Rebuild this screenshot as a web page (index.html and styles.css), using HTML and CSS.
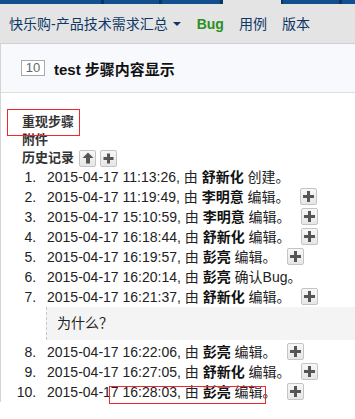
FILE: index.html
```html
<!DOCTYPE html>
<html lang="zh-CN">
<head>
    <meta charset="UTF-8">
    <meta name="viewport" content="width=device-width, initial-scale=1.0">
    <title>test 步骤内容显示</title>
    <link rel="stylesheet" href="styles.css">
</head>
<body>
    <div class="top-strip">
        <span class="tab" style="width: 104px"></span>
        <span class="tab" style="width: 58px"></span>
        <span class="tab" style="width: 61px"></span>
        <span class="tab tab-active" style="width: 60px"></span>
        <span class="tab" style="width: 59px"></span>
        <span class="tab"></span>
    </div>

    <div class="navbar">
        <span class="product">快乐购-产品技术需求汇总</span>
        <span class="caret"></span>
        <span class="nav-item nav-bug">Bug</span>
        <span class="nav-item">用例</span>
        <span class="nav-item">版本</span>
    </div>

    <div class="main">
        <div class="title-bar">
            <span class="bug-id">10</span>
            <span class="bug-title">test 步骤内容显示</span>
        </div>

        <div class="content">
            <div class="section-label">重现步骤</div>
            <div class="section-label">附件</div>
            <div class="section-label history-head">
                历史记录
                <span class="mini-btn first">
                    <svg width="12" height="12" viewBox="0 0 12 12"><path d="M6 0.5 L11.5 6 L8 6 L8 11.5 L4 11.5 L4 6 L0.5 6 Z" fill="#555"/></svg>
                </span>
                <span class="mini-btn">
                    <svg width="11" height="11" viewBox="0 0 11 11"><path d="M4 0.5 H7 V4 H10.5 V7 H7 V10.5 H4 V7 H0.5 V4 H4 Z" fill="#555"/></svg>
                </span>
            </div>

            <ol class="history">
                <li>2015-04-17 11:13:26, 由 <b>舒新化</b> 创建。</li>
                <li>2015-04-17 11:19:49, 由 <b>李明意</b> 编辑。<span class="mini-btn plus"></span></li>
                <li>2015-04-17 15:10:59, 由 <b>李明意</b> 编辑。<span class="mini-btn plus"></span></li>
                <li>2015-04-17 16:18:44, 由 <b>舒新化</b> 编辑。<span class="mini-btn plus"></span></li>
                <li>2015-04-17 16:19:57, 由 <b>彭亮</b> 编辑。<span class="mini-btn plus"></span></li>
                <li>2015-04-17 16:20:14, 由 <b>彭亮</b> 确认Bug。</li>
                <li>2015-04-17 16:21:37, 由 <b>舒新化</b> 编辑。<span class="mini-btn plus"></span>
                    <div class="comment">为什么？</div>
                </li>
                <li>2015-04-17 16:22:06, 由 <b>彭亮</b> 编辑。<span class="mini-btn plus"></span></li>
                <li>2015-04-17 16:27:05, 由 <b>舒新化</b> 编辑。<span class="mini-btn plus"></span></li>
                <li>2015-04-17 16:28:03, 由 <b>彭亮</b> 编辑。<span class="mini-btn plus"></span></li>
            </ol>
        </div>
    </div>

    <!-- red annotation frames drawn over the screenshot -->
    <div class="mark mark-steps"></div>
    <div class="mark mark-last"></div>
</body>
</html>
```

FILE: styles.css
```css
* {
    box-sizing: border-box;
    margin: 0;
    padding: 0;
}

body {
    font-family: "Liberation Sans", "Noto Sans CJK SC", sans-serif;
    font-size: 14px;
    color: #222;
    background: #fff;
    overflow: hidden;
}

/* Top strip */
.top-strip {
    display: flex;
    height: 4px;
    background: #0e4682;
}

.tab {
    height: 4px;
    background: #124f8f;
    border-right: 3px solid #0a3563;
}

.tab:last-child {
    flex: 1;
    border-right: none;
}

.tab-active {
    background: #e4e4e4;
    border-right: 2px solid #0a3563;
}

/* Navbar */
.navbar {
    display: flex;
    align-items: center;
    height: 40px;
    padding-left: 9px;
    background: #e4e4e4;
    border-bottom: 1px solid #d0d0d0;
    color: #0d3866;
    line-height: 20px;
}

.caret {
    width: 0;
    height: 0;
    margin-left: 5px;
    margin-top: 1px;
    border-left: 4px solid transparent;
    border-right: 4px solid transparent;
    border-top: 4px solid #0d3866;
}

.nav-item {
    margin-left: 15px;
}

.nav-bug {
    margin-left: 16px;
    color: #2b8f22;
    font-weight: bold;
}

/* Title bar */
.main {
    border-left: 1px solid #d4d4d4;
}

.title-bar {
    display: flex;
    align-items: center;
    height: 49px;
    padding-left: 20px;
    background: #f8f9fd;
    border-bottom: 1px solid #dedede;
}

.bug-id {
    width: 24px;
    height: 16px;
    border: 1px solid #aaa;
    background: #fff;
    color: #666;
    font-size: 13px;
    line-height: 14px;
    text-align: center;
}

.bug-title {
    margin-left: 9px;
    font-size: 15px;
    font-weight: bold;
    color: #111;
}

/* Content */
.content {
    padding: 20px 0 0 21px;
}

.section-label {
    font-size: 13px;
    font-weight: bold;
    line-height: 18px;
    color: #333;
}

.history-head {
    display: flex;
    align-items: center;
}

.mini-btn {
    display: inline-flex;
    align-items: center;
    justify-content: center;
    width: 17px;
    height: 17px;
    margin-left: 4px;
    vertical-align: middle;
    border: 1px solid #c4c4c4;
    border-radius: 2px;
    background: linear-gradient(#f7f7f7, #e6e6e6);
}

.mini-btn.first {
    margin-left: 5px;
}

.mini-btn.plus {
    margin-left: 10px;
    margin-top: -3px;
}

.mini-btn.plus::before {
    content: "";
    width: 11px;
    height: 11px;
    background:
        linear-gradient(#555, #555) center / 11px 3px no-repeat,
        linear-gradient(#555, #555) center / 3px 11px no-repeat;
}

.history {
    padding-left: 18px;
}

.history li {
    padding-left: 7px;
    line-height: 20px;
    color: #222;
}

.history b {
    color: #111;
}

.comment {
    height: 33px;
    margin: 0 0 2px -1px;
    padding-left: 10px;
    line-height: 33px;
    background: #f4f4f4;
    border-left: 1px dashed #c8c8c8;
    color: #222;
}

/* Annotation frames */
.mark {
    position: absolute;
    border: 1px solid #f0282e;
}

.mark-steps {
    left: 7px;
    top: 109px;
    width: 73px;
    height: 27px;
}

.mark-last {
    left: 109px;
    top: 386px;
    width: 157px;
    height: 18px;
}
```
